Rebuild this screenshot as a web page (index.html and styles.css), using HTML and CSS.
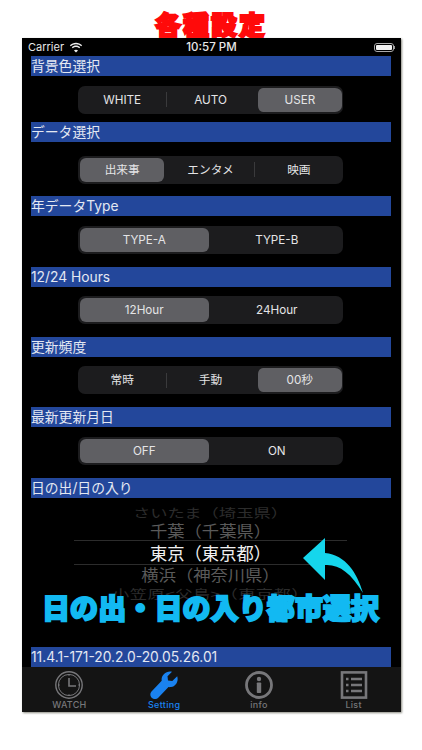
FILE: index.html
```html
<!DOCTYPE html>
<html lang="ja">
<head>
<meta charset="utf-8">
<title>各種設定</title>
<link rel="stylesheet" href="styles.css">
</head>
<body>
<h1 class="title">各種設定</h1>
<main class="phone">
  <div class="status">
    <div class="status-left">
      <span>Carrier</span>
      <svg class="wifi" viewBox="0 0 16 12"><path d="M8 2.2c2.3 0 4.4.9 6 2.4l1-1.1C13.1 1.7 10.700 .6 8 .6S2.900 1.700 1 3.500l1 1.100c1.600-1.500 3.700-2.400 6-2.400zM8 5.400c1.400 0 2.700.5 3.700 1.500l1.100-1.100C11.500 4.500 9.800 3.800 8 3.800s-3.500.7-4.800 2l1.100 1.100c1-1 2.300-1.500 3.700-1.500zM8 8.500c-.9 0-1.700.3-2.300.9L8 11.800l2.300-2.400c-.6-.6-1.400-.9-2.300-.9z" fill="#eee"/></svg>
    </div>
    <div class="status-time">10:57 PM</div>
    <div class="status-right"><span class="battery"><span class="battery-fill"></span></span><span class="battery-cap"></span></div>
  </div>

  <section class="section section-first">
    <h2 class="head">背景色選択</h2>
    <div class="seg">
      <span class="opt">WHITE</span><i class="sep"></i><span class="opt">AUTO</span><span class="opt on">USER</span>
    </div>
  </section>
  <section class="section section-wide">
    <h2 class="head">データ選択</h2>
    <div class="seg">
      <span class="opt on">出来事</span><span class="opt">エンタメ</span><i class="sep"></i><span class="opt">映画</span>
    </div>
  </section>
  <section class="section">
    <h2 class="head">年データType</h2>
    <div class="seg">
      <span class="opt on">TYPE-A</span><span class="opt">TYPE-B</span>
    </div>
  </section>
  <section class="section">
    <h2 class="head">12/24 Hours</h2>
    <div class="seg">
      <span class="opt on">12Hour</span><span class="opt">24Hour</span>
    </div>
  </section>
  <section class="section">
    <h2 class="head">更新頻度</h2>
    <div class="seg">
      <span class="opt">常時</span><i class="sep"></i><span class="opt">手動</span><span class="opt on">00秒</span>
    </div>
  </section>
  <section class="section section-last">
    <h2 class="head">最新更新月日</h2>
    <div class="seg">
      <span class="opt on">OFF</span><span class="opt">ON</span>
    </div>
  </section>
  <section class="picker-section">
    <h2 class="head">日の出/日の入り</h2>
    <div class="picker">
      <div class="row row-far row-a"><span>さいたま（埼玉県）</span></div>
      <div class="row row-near row-b"><span>千葉（千葉県）</span></div>
      <div class="row row-sel">東京（東京都）</div>
      <div class="row row-near row-c"><span>横浜（神奈川県）</span></div>
      <div class="row row-far row-d"><span>小笠原&lt;父島&gt;（東京都）</span></div>
    </div>
  </section>
  <div class="head">11.4.1-171-20.2.0-20.05.26.01</div>

  <nav class="tabbar">
    <div class="tab">
      <svg class="tab-icon" viewBox="0 0 28 28" fill="none" stroke="#77777a"><circle cx="14" cy="14" r="13.200" stroke-width="1.400"/><circle cx="14" cy="14" r="10.600" stroke-width="1"/><path d="M14 7v8h7" stroke-width="1.600"/><path d="M14 3.400v1.500M14 23.100v1.500M3.400 14h1.500M23.100 14h1.500" stroke-width="1"/></svg>
      <span>WATCH</span>
    </div>
    <div class="tab tab-on">
      <svg class="tab-icon" viewBox="0 0 28 28"><path fill="#1a82f0" d="M22 .8L17.500 5.200 18 9.500 22.300 10 27.200 5.200C28.800 10 26 15.500 21 16 20 16.200 19.300 16.200 18.500 16L8 27C5.500 29 1.500 28 .6 25 0 23 .5 21.500 2 20L11.700 9.800C10.800 4.500 16 -.6 22 .8Z"/></svg>
      <span>Setting</span>
    </div>
    <div class="tab">
      <svg class="tab-icon" viewBox="0 0 28 28"><circle cx="14" cy="14" r="12.500" fill="none" stroke="#77777a" stroke-width="2.800"/><circle cx="14" cy="8" r="2.200" fill="#77777a"/><rect x="11.800" y="11.500" width="4.400" height="10.500" rx=".8" fill="#77777a"/></svg>
      <span>info</span>
    </div>
    <div class="tab">
      <svg class="tab-icon" viewBox="0 0 28 28" fill="none" stroke="#77777a"><rect x="2" y="1.400" width="24" height="25.200" stroke-width="2.600"/><path d="M11 8h11M11 14h11M11 20h11" stroke-width="2.400"/><path d="M6 8h2.500M6 14h2.500M6 20h2.500" stroke-width="2.400"/></svg>
      <span>List</span>
    </div>
  </nav>

  <svg class="arrow" viewBox="0 0 70 62"><path fill="#15d6ec" d="M2 21 24 1V16C45 18 56 36 62 56 50 36 38 27 24 28V43Z"/></svg>
  <div class="banner">日の出・日の入り都市選択</div>
</main>
</body>
</html>
```
FILE: styles.css
```css
* { box-sizing: border-box; }
html, body { margin: 0; padding: 0; }
body {
  width: 422px;
  height: 750px;
  overflow: hidden;
  background: #fff;
  font-family: Inter, "Noto Sans CJK JP", sans-serif;
  color: #e6e8ee;
}
.title {
  margin: 0;
  height: 38px;
  padding-top: 10px;
  text-align: center;
  font-family: "Noto Sans CJK JP", sans-serif;
  font-size: 26px;
  line-height: 27px;
  font-weight: 900;
  color: #ff0a0a;
  -webkit-text-stroke: 2px #ff0a0a;
  letter-spacing: 2px;
}
.phone {
  position: relative;
  width: 379px;
  height: 674px;
  margin-left: 22px;
  background: #000;
  display: flex;
  flex-direction: column;
  box-shadow: 1px 1px 2px #8a8a80;
}
.status {
  height: 18px;
  display: grid;
  grid-template-columns: 1fr auto 1fr;
  align-items: center;
  padding: 0 6px;
  font-size: 11px;
  line-height: 14px;
  color: #e8e8e8;
}
.status-left { display: flex; align-items: center; gap: 5px; }
.wifi { width: 14px; height: 11px; }
.status-time {
  font-size: 11.500px;
  font-weight: 500;
}
.status-right { display: flex; align-items: center; justify-content: flex-end; }
.battery {
  width: 20px;
  height: 9px;
  border: 1px solid #aaa;
  border-radius: 3px;
  padding: 1px;
  display: block;
}
.battery-fill { display: block; height: 100%; background: #f2f2f2; border-radius: 1px; }
.battery-cap { width: 1px; height: 3px; background: #999; display: block; }
.head {
  margin: 0 10px 0 9px;
  height: 20px;
  background: #23479b;
  font-size: 13.800px;
  font-weight: 400;
  line-height: 21px;
  color: #e4e8f2;
  white-space: nowrap;
}
.section { padding-bottom: 12.900px; }
.section-first { padding-bottom: 8.500px; }
.section-last { padding-bottom: 13.100px; }
.section-wide { padding-bottom: 12.700px; }
.section-wide .seg { margin-top: 13.500px; }
.seg {
  margin: 9.500px 0 0 56px;
  width: 265px;
  height: 28px;
  background: #1c1c1e;
  border-radius: 7px;
  display: flex;
  align-items: center;
  font-size: 11.700px;
  color: #e4e4e6;
}
.opt {
  flex: 1 1 0;
  height: 28px;
  line-height: 24px;
  border: 2px solid transparent;
  text-align: center;
  border-radius: 8px;
  white-space: nowrap;
}
.opt.on { background: #5f5f63; background-clip: padding-box; }
.opt.on:last-child { border-left-width: 3px; border-right-width: 1px; }
.sep { width: 1px; height: 15px; margin: 0 -.5px; background: #3a3a3c; flex: none; }
.picker-section { height: 169px; }
.picker {
  height: 149px;
  padding-top: 7px;
  overflow: hidden;
}
.row {
  width: 273px;
  margin-left: 52px;
  text-align: center;
  font-family: "Noto Sans CJK JP", sans-serif;
  font-size: 17.300px;
  white-space: nowrap;
}
.row span { display: block; }
.row-far { color: #2c2c2c; height: 18px; line-height: 18px; }
.row-far span { transform: scaleY(.72); }
.row-near { color: #5a5a5a; height: 20px; line-height: 20px; }
.row-near span { transform: scaleY(.9); }
.row-a { height: 16px; line-height: 16px; }
.row-b { height: 19px; }
.row-c { height: 20px; }
.row-d { letter-spacing: .4px; }
.row-sel {
  height: 25px;
  line-height: 24px;
  color: #f0f0f0;
  border-top: 1px solid #2c2c2c;
  border-bottom: 1px solid #2c2c2c;
}
.tabbar {
  height: 45px;
  background: #141414;
  display: flex;
}
.tab {
  flex: 1 1 0;
  display: flex;
  flex-direction: column;
  align-items: center;
  padding-top: 4px;
  font-size: 9px;
  line-height: 11px;
  font-weight: 500;
  color: #77777a;
  letter-spacing: .3px;
}
.tab-on { color: #1a82f0; }
.tab-icon { width: 28px; height: 28px; display: block; }
.arrow {
  position: absolute;
  left: 279px;
  top: 499px;
  width: 70px;
  height: 62px;
}
.banner {
  position: absolute;
  left: 20px;
  top: 552px;
  white-space: nowrap;
  font-family: "Noto Sans CJK JP", sans-serif;
  font-size: 28px;
  line-height: 34px;
  font-weight: 900;
  letter-spacing: .1px;
  color: #12b9f2;
  -webkit-text-stroke: 2px #12b9f2;
}
```
